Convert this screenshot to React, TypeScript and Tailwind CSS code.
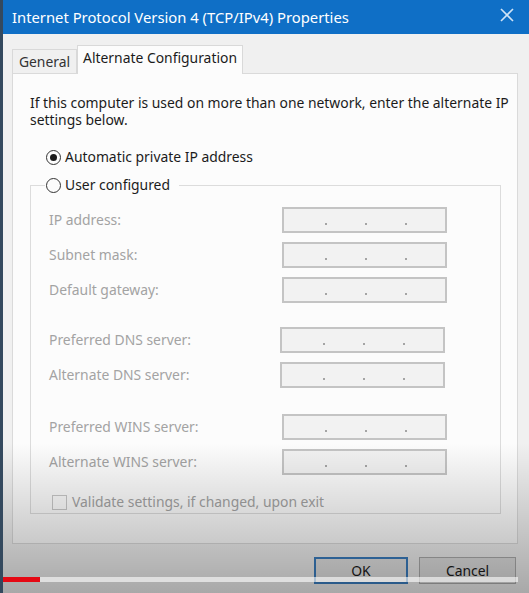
import React from 'react';

const fields = [
  { label: 'IP address:', group: 0 },
  { label: 'Subnet mask:', group: 0 },
  { label: 'Default gateway:', group: 0 },
  { label: 'Preferred DNS server:', group: 1 },
  { label: 'Alternate DNS server:', group: 1 },
  { label: 'Preferred WINS server:', group: 2 },
  { label: 'Alternate WINS server:', group: 2 },
];

const IpBox: React.FC = () => (
  <div className="flex h-[26px] w-[165px] items-end justify-center gap-[38px] border-2 border-[#c4c4c4] bg-[#f2f2f2] pb-[6px] pl-[2px] text-[#8a8a8a]">
    <span className="h-[2px] w-[2px] rounded-full bg-[#8a8a8a]" />
    <span className="h-[2px] w-[2px] rounded-full bg-[#8a8a8a]" />
    <span className="h-[2px] w-[2px] rounded-full bg-[#8a8a8a]" />
  </div>
);

const Row: React.FC<{ label: string; top: string; shift: string }> = ({ label, top, shift }) => (
  <div className={`flex items-center ${top}`}>
    <span className="w-[251px] pl-[18px] text-[#a3a3a3]">{label}</span>
    <div className={shift}>
      <IpBox />
    </div>
  </div>
);

export default function App() {
  return (
    <div
      className="relative h-[593px] w-[529px] overflow-hidden border-l-[3px] border-[#34495e] bg-[#f0f0f0] text-[13.9px] leading-[16px] text-[#1b1b1b]"
      style={{ fontFamily: '"Noto Sans", "Open Sans", sans-serif' }}
    >
      {/* title bar */}
      <div className="flex h-[34px] items-center justify-between bg-[#0f6fc6] pl-[9px] pr-[14px] text-[14.8px] text-white">
        <span>Internet Protocol Version 4 (TCP/IPv4) Properties</span>
        <svg width="16" height="16" viewBox="0 0 16 16" className="mb-[4px]">
          <path d="M2 2L14 14M14 2L2 14" stroke="#cfe3f6" strokeWidth="1.6" fill="none" />
        </svg>
      </div>

      {/* tabs */}
      <div className="ml-[9px] mt-[11px] flex items-end">
        <div className="flex h-[24px] w-[65px] items-center justify-center border border-b-0 border-[#d9d9d9] bg-[#f0f0f0] text-[#333]">
          General
        </div>
        <div className="relative z-10 -mb-px flex h-[29px] w-[166px] items-center justify-center border border-b-0 border-[#d9d9d9] bg-[#fcfcfc] pb-[4px]">
          Alternate Configuration
        </div>
      </div>

      {/* panel */}
      <div className="ml-[9px] h-[471px] w-[506px] border border-[#dadada] bg-[#fcfcfc] pl-[17px] pt-[20px]">
        <p className="leading-[17px]">
          If this computer is used on more than one network, enter the alternate IP
          <br />
          settings below.
        </p>

        <div className="ml-[16px] mt-[21px] flex items-center gap-[4px]">
          <span className="flex h-[15px] w-[15px] items-center justify-center rounded-full border-[1.5px] border-[#333]">
            <span className="h-[7px] w-[7px] rounded-full bg-[#1b1b1b]" />
          </span>
          <span>Automatic private IP address</span>
        </div>

        <fieldset className="mt-[12px] h-[337px] w-[471px] border border-[#dcdcdc] pb-0">
          <legend className="ml-[14px] flex items-center gap-[4px] pl-[1px] pr-[9px]">
            <span className="h-[15px] w-[15px] rounded-full border-[1.5px] border-[#333]" />
            <span>User configured</span>
          </legend>

          <Row label={fields[0].label} top="mt-[14px]" shift="ml-0" />
          <Row label={fields[1].label} top="mt-[9px]" shift="ml-0" />
          <Row label={fields[2].label} top="mt-[9px]" shift="ml-0" />
          <Row label={fields[3].label} top="mt-[24px]" shift="-ml-[2px]" />
          <Row label={fields[4].label} top="mt-[9px]" shift="-ml-[2px]" />
          <Row label={fields[5].label} top="mt-[26px]" shift="ml-0" />
          <Row label={fields[6].label} top="mt-[9px]" shift="ml-0" />

          <div className="ml-[21px] mt-[19px] flex items-center gap-[5px] text-[#a3a3a3]">
            <span className="h-[15px] w-[15px] border border-[#c8c8c8] bg-[#fcfcfc]" />
            <span>Validate settings, if changed, upon exit</span>
          </div>
        </fieldset>
      </div>

      {/* buttons */}
      <div className="mt-[13px] flex justify-end gap-[11px] pr-[13px]">
        <div className="flex h-[27px] w-[94px] items-center justify-center border-2 border-[#3b7ec0] bg-[#e5e5e5]">OK</div>
        <div className="flex h-[27px] w-[97px] items-center justify-center border border-[#adadad] bg-[#e1e1e1]">Cancel</div>
      </div>

      {/* video overlay: bottom shade and progress bar */}
      <div className="pointer-events-none absolute inset-x-0 bottom-0 h-[150px] bg-linear-to-b from-transparent to-black/30" />
      <div className="absolute bottom-[11px] left-[-3px] flex h-[5px] w-[518px]">
        <div className="w-[40px] bg-[#e50914]" />
        <div className="flex-1 bg-white/60" />
      </div>
    </div>
  );
}
